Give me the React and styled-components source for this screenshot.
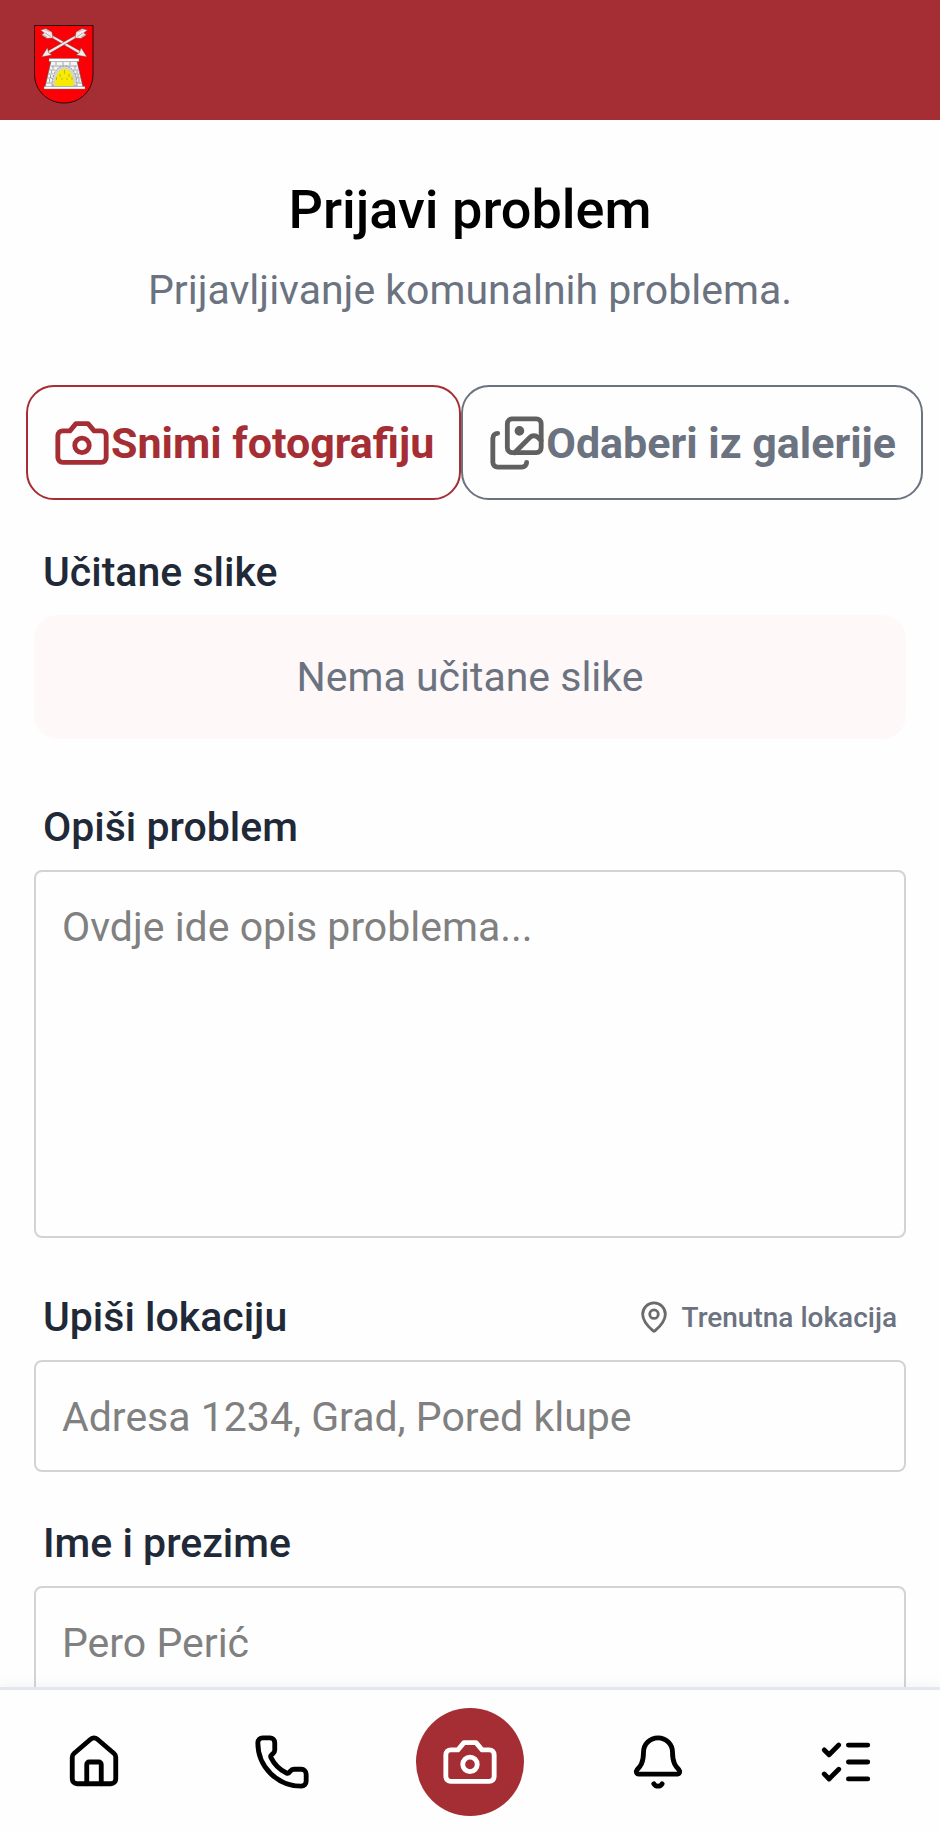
import styled, {createGlobalStyle} from "styled-components";
import {useState} from "react";
import {Bell, House, Images, ListChecks, MapPin, Phone} from "lucide-react";

const Camera = ({size}) => (
  <svg width={size} height={size} viewBox="0 0 24 24" fill="none" stroke="currentColor" strokeWidth="2" strokeLinecap="round" strokeLinejoin="round" aria-hidden="true">
    <path d="M14.5 4h-5L7 7H4a2 2 0 0 0-2 2v9a2 2 0 0 0 2 2h16a2 2 0 0 0 2-2V9a2 2 0 0 0-2-2h-3l-2.5-3z" />
    <circle cx="12" cy="13" r="3" />
  </svg>
);

const CoatOfArms = () => (
  <svg width="60" height="80" viewBox="0 0 60 80" role="img" aria-label="Grb">
    <path d="M0.5 1.5H59V50C59 67 46 79 30 79S0.5 67 0.5 50Z" fill="#fb0007" stroke="#2e0a0a" strokeWidth="1" />
    <g stroke="#7a2a2a" strokeWidth="0.5" strokeLinejoin="round">
      <g fill="#f4eaea">
        <path d="M13 11L14.500 9L47 27.500L45.500 30Z" />
        <path d="M53 33L42 31L45.500 28.500L47 23.500Z" />
        <path d="M6.500 6L12 4.500L18 8L19 14L13 14.500L7.500 11L10 9Z" />
        <path d="M47 11L45.500 9L13 27.500L14.500 30Z" />
        <path d="M7.500 33L18 31L14.500 28.500L13.500 23.500Z" />
        <path d="M53.500 6L48 4.500L42 8L41 14L47 14.500L52.500 11L50 9Z" />
      </g>
      <path d="M9 8L17 12.500M11 5.500L16 8M9 11L13 13M51 8L43 12.500M49 5.500L44 8M51 11L47 13" fill="none" stroke="#8c7777" />
    </g>
    <path d="M17 37H43L49 63H11Z" fill="#f5f5f5" stroke="#555" strokeWidth="0.6" />
    <path
      d="M17 42H43M15.500 46H21M39 46H44.500M14.500 50H19M41 50H45.500M13.500 54H18M42 54H46.500M12.500 59H18M42 59H47.500M22 37.500V41M29 37.500V41M36 37.500V41M19 42V45M41 42V45M17.500 47V49M43 47V49M16.500 51V54M44 51V54M15.500 55V58M45 55V58"
      stroke="#7d838a"
      strokeWidth="0.7"
    />
    <path d="M18 62C18 49 23 42 30.500 42S43 49 43 62Z" fill="#d3d3cf" stroke="#777" strokeWidth="0.7" strokeDasharray="2 1" />
    <path d="M21 62C21 51 25 45 30.500 45S39.500 51 39.500 62Z" fill="#f8ea00" />
    <path d="M26 53V50M30.500 50V46M35 53V50M22.500 56V53M38 56V53M28 56V54M33 56V54" stroke="#9c9420" strokeWidth="0.6" />
    <path d="M15 34.500H45V37.500H15ZM10 62.500H51V65H10Z" fill="#fff" stroke="#777" strokeWidth="0.4" />
  </svg>
);

const App = () => {
  const [description, setDescription] = useState("");
  const [location, setLocation] = useState("");
  const [fullName, setFullName] = useState("");

  return (
    <Page>
      <GlobalStyle />
      <Header>
        <CoatOfArms />
      </Header>
      <Content>
        <Title>Prijavi problem</Title>
        <Subtitle>Prijavljivanje komunalnih problema.</Subtitle>
        <PhotoButtons>
          <PhotoButton type="button" $color="#a52e34">
            <Camera size={58} />
            Snimi fotografiju
          </PhotoButton>
          <PhotoButton type="button" $color="#6b7280" $iconColor="#606060">
            <Images size={58} />
            Odaberi iz galerije
          </PhotoButton>
        </PhotoButtons>
        <Form>
          <Section $top={48}>
            <Heading>Učitane slike</Heading>
            <EmptyImages>Nema učitane slike</EmptyImages>
          </Section>
          <Section $top={64}>
            <Label htmlFor="description">Opiši problem</Label>
            <TextArea
              id="description"
              placeholder="Ovdje ide opis problema..."
              value={description}
              onChange={e => setDescription(e.target.value)}
            />
          </Section>
          <Section $top={55}>
            <LabelRow>
              <Label htmlFor="location">Upiši lokaciju</Label>
              <LocationButton type="button">
                <MapPin size={34} />
                Trenutna lokacija
              </LocationButton>
            </LabelRow>
            <Input
              id="location"
              placeholder="Adresa 1234, Grad, Pored klupe"
              value={location}
              onChange={e => setLocation(e.target.value)}
            />
          </Section>
          <Section $top={47}>
            <Label htmlFor="fullName">Ime i prezime</Label>
            <Input
              id="fullName"
              placeholder="Pero Perić"
              value={fullName}
              onChange={e => setFullName(e.target.value)}
            />
          </Section>
        </Form>
      </Content>
      <BottomNav>
        <NavLink href="#home" aria-label="Početna"><House size={58} /></NavLink>
        <NavLink href="#contacts" aria-label="Kontakti"><Phone size={58} /></NavLink>
        <NavLink href="#report" aria-label="Prijavi problem">
          <ActiveCircle><Camera size={58} /></ActiveCircle>
        </NavLink>
        <NavLink href="#notifications" aria-label="Obavijesti"><Bell size={58} /></NavLink>
        <NavLink href="#reports" aria-label="Prijave"><ListChecks size={58} /></NavLink>
      </BottomNav>
    </Page>
  );
}

const GlobalStyle = createGlobalStyle`
  * {
    box-sizing: border-box;
  }
  body {
    margin: 0;
    background-color: #fefefe;
    font-family: Roboto, "Liberation Sans", sans-serif;
  }
  button, input, textarea {
    font-family: inherit;
  }
`;

const Page = styled.div`
  display: flex;
  flex-direction: column;
  height: 100vh;
`;

const Header = styled.header`
  flex: none;
  display: flex;
  padding: 24px 34px 16px;
  background-color: #a52e34;
`;

const Content = styled.main`
  flex: 1;
  min-height: 0;
  padding-top: 58px;
  overflow-y: auto;
  scrollbar-width: none;
`;

const Title = styled.h1`
  margin: 0;
  font-size: 54px;
  line-height: 64px;
  font-weight: 500;
  text-align: center;
  color: #000;
`;

const Subtitle = styled.p`
  margin: 24px 0 71px;
  font-size: 41px;
  line-height: 48px;
  text-align: center;
  color: #6b7280;
`;

const PhotoButtons = styled.div`
  display: flex;
  padding: 0 17px 0 26px;
`;

const PhotoButton = styled.button`
  flex: 1 1 auto;
  display: flex;
  align-items: center;
  justify-content: center;
  height: 115px;
  padding: 0 24px;
  font-size: 43px;
  font-weight: 700;
  white-space: nowrap;
  color: ${props => props.$color};
  background-color: transparent;
  border: 2px solid ${props => props.$color};
  border-radius: 28px;
  svg {
    flex: none;
    color: ${props => props.$iconColor || props.$color};
  }
`;

const Form = styled.form`
  padding: 0 34px;
`;

const Section = styled.section`
  display: flex;
  flex-direction: column;
  gap: 19px;
  margin-top: ${props => props.$top}px;
`;

const Label = styled.label`
  padding-left: 9px;
  font-size: 41px;
  line-height: 48px;
  font-weight: 500;
  color: #1f2937;
`;

const Heading = styled(Label).attrs({as: "h2"})`
  margin: 0;
`;

const EmptyImages = styled.div`
  padding: 38px 0;
  font-size: 41px;
  line-height: 48px;
  text-align: center;
  color: #6b7280;
  background-color: #fef8f8;
  border-radius: 24px;
`;

const Input = styled.input`
  width: 100%;
  height: 112px;
  padding: 2px 26px 0;
  font-size: 41px;
  color: #1f2937;
  background-color: transparent;
  border: 2px solid #d1d3d6;
  border-radius: 8px;
  outline: none;
  &::placeholder {
    color: #808080;
    opacity: 1;
  }
`;

const TextArea = styled(Input).attrs({as: "textarea"})`
  height: 368px;
  padding: 31px 26px;
  line-height: 48px;
  resize: none;
`;

const LabelRow = styled.div`
  display: flex;
  align-items: center;
  justify-content: space-between;
`;

const LocationButton = styled.button`
  display: flex;
  align-items: center;
  gap: 11px;
  padding: 0 9px;
  font-size: 28px;
  font-weight: 500;
  color: #6b7280;
  background: none;
  border: none;
  svg {
    color: #6b6b6b;
  }
`;

const BottomNav = styled.nav`
  flex: none;
  display: grid;
  grid-template-columns: repeat(5, 1fr);
  align-items: center;
  padding: 18px 0 15px;
  background-color: #fefefe;
  border-top: 3px solid #e5e7ee;
  box-shadow: 0 -2px 12px rgba(100, 110, 160, 0.08);
`;

const NavLink = styled.a`
  display: flex;
  align-items: center;
  justify-content: center;
  color: #000;
`;

const ActiveCircle = styled.span`
  display: flex;
  align-items: center;
  justify-content: center;
  width: 108px;
  height: 108px;
  color: #fff;
  background-color: #a52e34;
  border-radius: 50%;
`;

export default App;
